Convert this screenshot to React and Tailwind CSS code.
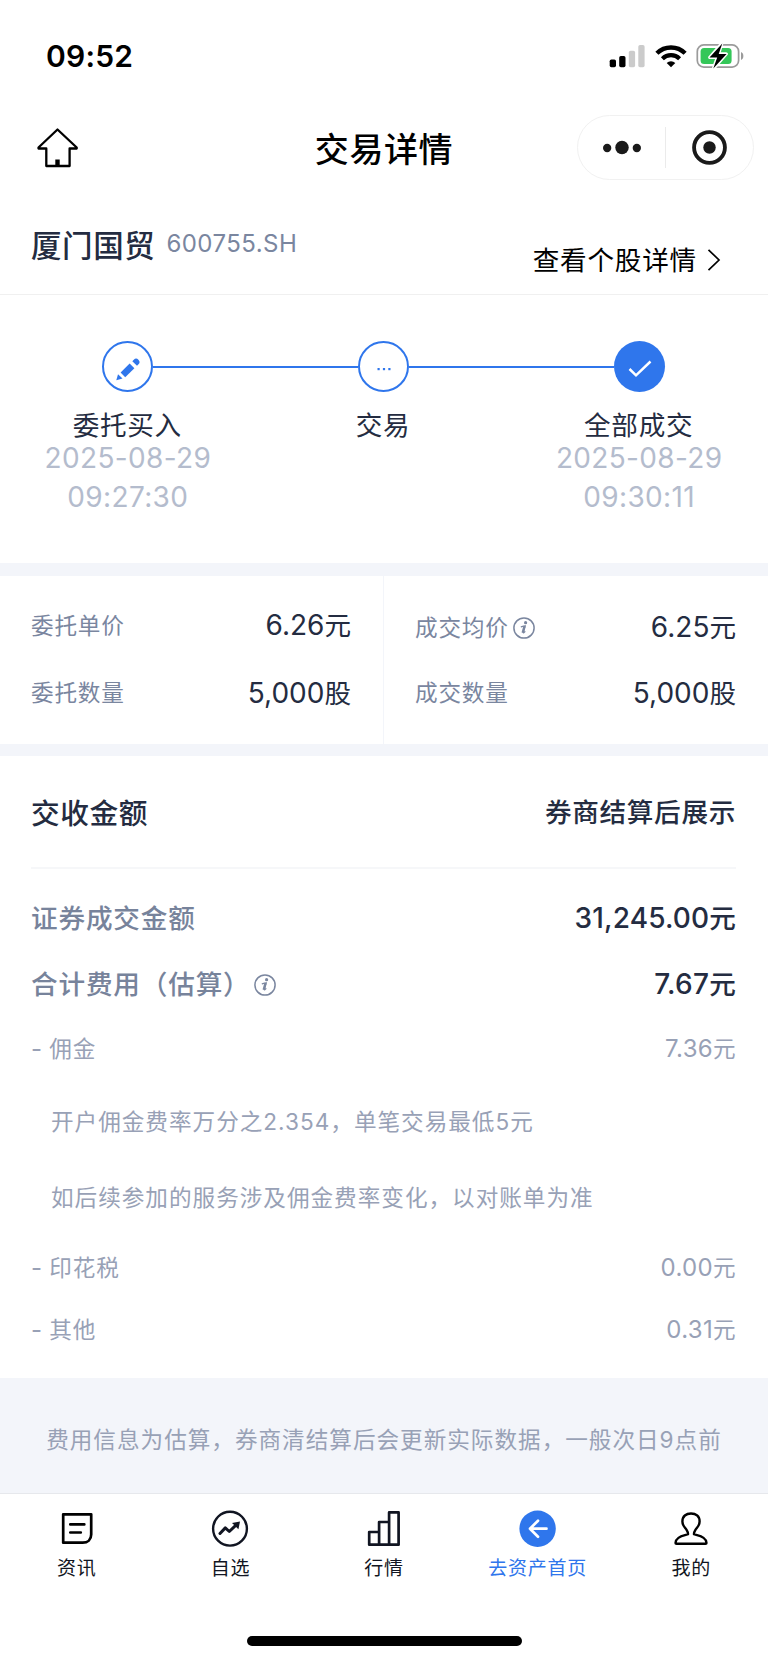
import React from "react";

function InfoIcon({ className }) {
  return (
    <svg viewBox="0 0 22 22" className={className} fill="none">
      <circle cx="11" cy="11" r="10.1" stroke="#7a869f" strokeWidth="1.500" />
      <circle cx="12.600" cy="5.700" r="1.600" fill="#7a869f" />
      <path d="M7.800 9.900c1.300-.4 2.800-.9 4.400-1l-2 6.700c0 .5 1 0 2.100-1.200" stroke="#7a869f" strokeWidth="1.300" />
      <path d="M11.500 9.300 9.700 15.800" stroke="#7a869f" strokeWidth="2.400" />
    </svg>
  );
}

function StatusBar() {
  return (
    <div className="flex h-[112px] items-center justify-between pr-[23px] pl-[46px]">
      <span className="text-[30px] leading-none font-semibold tracking-[0.200px] text-black">09:52</span>
      <div className="flex items-center">
        <svg width="36" height="24" viewBox="0 0 36 24">
          <rect x="0.700" y="15.500" width="6.300" height="7.700" rx="1.700" fill="#000" />
          <rect x="10.200" y="12" width="6.300" height="11.200" rx="1.700" fill="#000" />
          <rect x="19.800" y="6.700" width="6.300" height="16.500" rx="1.700" fill="#cbcbcb" />
          <rect x="29.300" y="1" width="6.300" height="22.200" rx="1.700" fill="#cbcbcb" />
        </svg>
        <svg className="ml-[10px]" width="32" height="24" viewBox="0 0 32 24" fill="none" stroke="#000">
          <path d="M1.900 9.300a20 20 0 0 1 28.200 0" strokeWidth="4.400" />
          <path d="M7.400 14.700a12.300 12.300 0 0 1 17.200 0" strokeWidth="4.200" />
          <path d="M11.700 19a6.200 6.200 0 0 1 8.600 0L16 23.200z" fill="#000" stroke="none" />
        </svg>
        <svg className="ml-[9px]" width="49" height="26" viewBox="0 0 49 26">
          <rect x="1.300" y="1.900" width="41.300" height="22.200" rx="6.500" fill="none" stroke="#9b9b9b" strokeWidth="1.700" />
          <rect x="4.600" y="4.900" width="31" height="16.200" rx="3.500" fill="#34c759" />
          <path d="M45 9v8c3.200-1.300 3.200-6.700 0-8z" fill="#9b9b9b" />
          <path d="M25.600 0.800 13.900 14.400h7.500L17.600 25.400 30.200 11h-7.700z" fill="#fff" stroke="#fff" strokeWidth="3.400" strokeLinejoin="round" />
          <path d="M26.300 0.600 13.500 14.600h7.700L17.300 25.400 30.600 10.900h-7.900z" fill="#000" />
        </svg>
      </div>
    </div>
  );
}

function NavBar() {
  return (
    <div className="grid h-[71px] grid-cols-[1fr_auto_1fr] items-center px-[14px]">
      <svg className="ml-[22px]" width="43" height="42" viewBox="0 0 43 42" fill="none" stroke="#000" strokeWidth="2.300" strokeLinejoin="round">
        <path d="M21.500 2.500 2.500 20.500v1h7.800v17.500h23.300V21.500h7.100v-1z" />
        <path d="M21.500 32.500V39" strokeWidth="4.400" />
      </svg>
      <h1 className="mt-[5px] text-[34px] leading-none font-medium tracking-[0.600px] text-black">交易详情</h1>
      <div className="flex h-[65px] w-[177px] items-center justify-self-end rounded-full border border-[#f1f1f1]">
        <svg className="flex-1" height="40" viewBox="0 0 88 40">
          <circle cx="29.500" cy="20" r="4.200" fill="#1a1a1a" />
          <circle cx="44.500" cy="19.500" r="6.800" fill="#1a1a1a" />
          <circle cx="59.500" cy="20" r="4.200" fill="#1a1a1a" />
        </svg>
        <div className="h-[41px] w-px bg-[#ebebeb]" />
        <svg className="flex-1" height="40" viewBox="0 0 88 40">
          <circle cx="44" cy="19.500" r="15.600" fill="none" stroke="#1a1a1a" strokeWidth="3.900" />
          <circle cx="44" cy="19.500" r="6.300" fill="#1a1a1a" />
        </svg>
      </div>
    </div>
  );
}

function StockHeader() {
  return (
    <div className="flex h-[112px] items-start justify-between border-b border-[#f0f0f0] pr-[47px] pl-[31px]">
      <div className="flex items-start pt-[48px] leading-[30px]">
        <span className="text-[30.500px] font-medium tracking-[0.600px] text-[#242c41]">厦门国贸</span>
        <span className="-mt-[2px] ml-[11px] text-[24px] tracking-[0.450px] text-[#7a869f]">600755.SH</span>
      </div>
      <div className="flex items-center pt-[62px] leading-[30px] text-black">
        <span className="text-[26.600px] tracking-[0.800px]">查看个股详情</span>
        <svg className="ml-[9px]" width="15" height="24" viewBox="0 0 15 24" fill="none" stroke="#000" strokeWidth="1.700">
          <path d="M2.500 1.800 13 12 2.500 22.200" />
        </svg>
      </div>
    </div>
  );
}

function Step({ label, date, time, first, last, filled, children }) {
  return (
    <div className="flex flex-col items-center">
      <div className="flex w-full items-center">
        <div className={first ? "h-[2px] flex-1" : "h-[2px] flex-1 bg-[#2f76ec]"} />
        <div
          className={
            filled
              ? "flex size-[51px] items-center justify-center rounded-full bg-[#2f76ec]"
              : "flex size-[51px] items-center justify-center rounded-full border-2 border-[#2f76ec]"
          }
        >
          {children}
        </div>
        <div className={last ? "h-[2px] w-[102px]" : "h-[2px] flex-1 bg-[#2f76ec]"} />
      </div>
      <div className="mt-[21px] pr-[1px] text-[26.600px] leading-[25px] tracking-[0.700px] text-[#242c41]">{label}</div>
      <div className="pt-[1px] text-center text-[28px] leading-[39px] tracking-[0.350px] text-[#b4bccd]">
        {date}
        <br />
        {time}
      </div>
    </div>
  );
}

function Steps() {
  return (
    <div className="grid h-[268px] w-[767px] grid-cols-3 pt-[46px]">
      <Step label="委托买入" date="2025-08-29" time="09:27:30" first>
        <svg width="26" height="26" viewBox="0 0 26 26" fill="#2f76ec" className="mt-[5px]">
          <path d="M1.300 24.200 3 18.200l4.500 4.300z" />
          <path d="M5.600 16.400 14.600 7.600l4.800 4.600-9.200 9z" />
          <path d="m17.300 5.300 1.500-1.500a3.100 3.100 0 0 1 4.700 4.500l-1.500 1.500z" />
        </svg>
      </Step>
      <Step label="交易">
        <svg width="14" height="4" viewBox="0 0 14 4" fill="#2f76ec" className="mt-[5px]">
          <rect x="0.500" y="1" width="2.200" height="2.200" />
          <rect x="5.900" y="1" width="2.200" height="2.200" />
          <rect x="11.300" y="1" width="2.200" height="2.200" />
        </svg>
      </Step>
      <Step label="全部成交" date="2025-08-29" time="09:30:11" last filled>
        <svg width="24" height="18" viewBox="0 0 24 18" fill="none" stroke="#fff" strokeWidth="2.500" className="mt-[5px]">
          <path d="M1.500 9 8 15.300 22.500 1.500" />
        </svg>
      </Step>
    </div>
  );
}

function Amount({ value, unit, className = "" }) {
  return (
    <span className={"text-[28px] text-[#242c41] " + className}>
      {value}
      <span className="text-[26.600px]">{unit}</span>
    </span>
  );
}

function QuoteCell({ label, value, unit, info, className }) {
  return (
    <div className={"flex items-center justify-between leading-none " + className}>
      <span className="flex items-center pt-[2px] text-[22.600px] tracking-[0.800px] text-[#7a869f]">
        {label}
        {info && <InfoIcon className="ml-[4px] size-[22px]" />}
      </span>
      <Amount value={value} unit={unit} />
    </div>
  );
}

function Quotes() {
  return (
    <div className="grid h-[193px] grid-cols-2 border-t-[13px] border-b-[12px] border-[#f3f5fa]">
      <div className="border-r border-[#f3f5fa] pt-[29px] pr-[32px] pl-[31px]">
        <QuoteCell className="h-[40px]" label="委托单价" value="6.26" unit="元" />
        <QuoteCell className="mt-[27px] h-[41px]" label="委托数量" value="5,000" unit="股" />
      </div>
      <div className="pt-[29px] pr-[32px] pl-[31px]">
        <QuoteCell className="h-[44px]" label="成交均价" value="6.25" unit="元" info />
        <QuoteCell className="mt-[23px] h-[41px]" label="成交数量" value="5,000" unit="股" />
      </div>
    </div>
  );
}

function FeeRow({ label, value, className }) {
  return (
    <div className={"flex items-center justify-between " + className}>
      <span className="text-[22.600px] tracking-[0.900px]">
        <span className="-mr-[1px] text-[24px]">-</span> {label}
      </span>
      <span className="text-[24px] tracking-[0.350px]">
        {value}
        <span className="text-[22.600px]">元</span>
      </span>
    </div>
  );
}

function Settlement() {
  return (
    <div className="h-[622px] pr-[32px] pl-[31px] leading-none">
      <div className="flex h-[111px] items-center justify-between font-medium text-[#242c41]">
        <span className="mt-[6px] text-[28.700px] tracking-[0.600px]">交收金额</span>
        <span className="mt-[2px] text-[26.600px] tracking-[0.700px]">券商结算后展示</span>
      </div>
      <div className="h-[2px] bg-[#f6f7f9]" />
      <div className="mt-[16px] flex h-[66px] items-center justify-between font-medium">
        <span className="text-[26.600px] tracking-[0.850px] text-[#77839b]">证券成交金额</span>
        <Amount value="31,245.00" unit="元" className="tracking-[0.150px]" />
      </div>
      <div className="flex h-[65px] items-center justify-between font-medium">
        <span className="flex items-center pt-[1px] text-[26.600px] tracking-[0.850px] text-[#77839b]">
          合计费用（估算）
          <InfoIcon className="mt-[1px] ml-[3px] size-[22px]" />
        </span>
        <Amount value="7.67" unit="元" className="tracking-[0.250px]" />
      </div>
      <div className="text-[#98a1b6]">
        <FeeRow className="h-[65px]" label="佣金" value="7.36" />
        <p className="flex h-[83px] items-center pl-[20px] text-[22.600px] tracking-[1px]">
          开户佣金费率万分之2.354，单笔交易最低5元
        </p>
        <p className="flex h-[69px] items-center pl-[20px] text-[22.600px] tracking-[1px]">
          如后续参加的服务涉及佣金费率变化，以对账单为准
        </p>
        <FeeRow className="h-[69px]" label="印花税" value="0.00" />
        <FeeRow className="h-[55px]" label="其他" value="0.31" />
      </div>
    </div>
  );
}

function Tab({ label, active, children }) {
  return (
    <div className="flex flex-col items-center pt-[15px]">
      {children}
      <span className={"mt-[10px] text-[19px] leading-[20px] tracking-[0.700px] " + (active ? "text-[#2f76ec]" : "text-[#111522]")}>
        {label}
      </span>
    </div>
  );
}

function TabBar() {
  return (
    <div className="grid h-[142px] grid-cols-5 border-t border-[#e6e8ec] bg-white">
      <Tab label="资讯">
        <svg width="40" height="40" viewBox="0 0 40 40" fill="none" stroke="#000" strokeWidth="2.700" strokeLinecap="round" strokeLinejoin="round">
          <path d="M6.200 5.300h28v20.200c0 5-3.500 8.200-8.500 8.200H6.200z" />
          <path d="M13.300 15.400h14M13.300 23.500h10.500" />
        </svg>
      </Tab>
      <Tab label="自选">
        <svg width="40" height="40" viewBox="0 0 40 40" fill="none" stroke="#111522" strokeWidth="2.400">
          <circle cx="20" cy="19.700" r="16.900" />
          <path d="m10 24.500 5.300-5.600 4 3.600 6.700-6.300" strokeWidth="3" strokeLinecap="round" strokeLinejoin="round" />
          <path d="m22 13.900 8-1.300-1.600 7.600z" fill="#111522" stroke="none" />
        </svg>
      </Tab>
      <Tab label="行情">
        <svg width="40" height="40" viewBox="0 0 40 40" fill="none" stroke="#111522" strokeWidth="2.700" strokeLinejoin="round">
          <path d="M5.200 23h9.900v12.700H5.200zM15.100 13h10v22.700h-10zM25.100 3.400h9.500v32.300h-9.500z" />
        </svg>
      </Tab>
      <Tab label="去资产首页" active>
        <svg width="40" height="40" viewBox="0 0 40 40" fill="none" stroke="#fff" strokeWidth="2.700" strokeLinecap="round" strokeLinejoin="round">
          <circle cx="19.600" cy="19.700" r="18.200" fill="#2f76ec" stroke="none" />
          <path d="M20 11.700 12 19.700l8 8M12 19.700h16.500" />
        </svg>
      </Tab>
      <Tab label="我的">
        <svg width="40" height="40" viewBox="0 0 40 40" fill="none" stroke="#000" strokeWidth="2.400" strokeLinejoin="round">
          <path d="M17 25.300c.2-1.600-.2-2.400-1.300-4.200-1.600-2.600-4.300-4.200-4.300-8.600 0-5.300 3.700-8 8.600-8s8.600 2.700 8.600 8c0 4.400-2.700 6-4.300 8.600-1.100 1.800-1.500 2.600-1.300 4.200 2 1 12.500 1.700 12.500 8.700 0 .6-.5.800-1 .8H5.500c-.6 0-1-.2-1-.8 0-7 10.500-7.700 12.500-8.700z" />
        </svg>
      </Tab>
    </div>
  );
}

export default function App() {
  return (
    <div className="flex h-[1663px] w-[768px] flex-col overflow-hidden bg-white font-['Inter','Noto_Sans_CJK_SC',sans-serif]" lang="zh-CN">
      <StatusBar />
      <NavBar />
      <StockHeader />
      <Steps />
      <Quotes />
      <Settlement />
      <div className="h-[115px] bg-[#f3f5fa] pt-[47px] text-center text-[22.600px] leading-[30px] tracking-[1px] whitespace-nowrap text-[#98a1b6]">
        费用信息为估算，券商清结算后会更新实际数据，一般次日9点前
      </div>
      <TabBar />
      <div className="flex flex-1 justify-center">
        <div className="mt-[1px] h-[10px] w-[275px] rounded-full bg-black" />
      </div>
    </div>
  );
}
